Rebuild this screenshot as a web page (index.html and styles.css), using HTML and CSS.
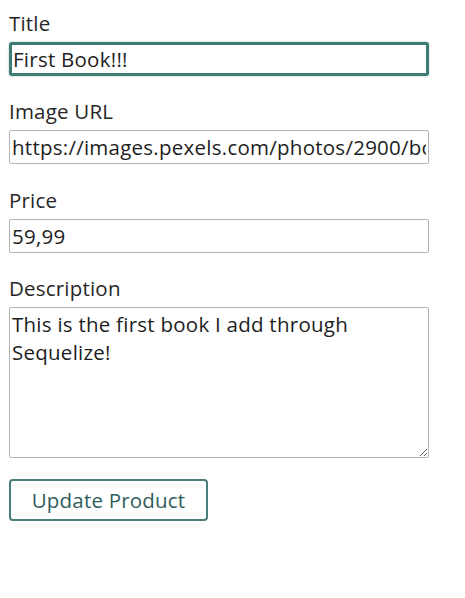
FILE: index.html
```html
<!DOCTYPE html>
<html>
<head>
<meta charset="utf-8">
<link rel="stylesheet" href="styles.css">
</head>
<body>
<form class="product-form">
  <div class="form-control">
    <label for="title">Title</label>
    <input class="field field--focused" type="text" id="title" value="First Book!!!">
  </div>
  <div class="form-control">
    <label for="imageUrl">Image URL</label>
    <input class="field" type="text" id="imageUrl" value="https://images.pexels.com/photos/2900/book-read.jpg">
  </div>
  <div class="form-control">
    <label for="price">Price</label>
    <input class="field" type="text" id="price" value="59,99">
  </div>
  <div class="form-control">
    <label for="description">Description</label>
    <textarea class="field field--area" id="description">This is the first book I add through Sequelize!</textarea>
  </div>
  <button class="btn" type="button">Update Product</button>
</form>
</body>
</html>
```
FILE: styles.css
```css
html, body {
  margin: 0;
  padding: 0;
  background: #ffffff;
}

body {
  font-family: "Open Sans", "Noto Sans", sans-serif;
  color: #262626;
}

.product-form {
  width: 420px;
  padding: 10px 0 0 9px;
  display: flex;
  flex-direction: column;
}

.form-control {
  display: flex;
  flex-direction: column;
  margin-bottom: 22.3px;
}

.form-control label {
  font-size: 20.5px;
  letter-spacing: 0.2px;
  line-height: 26px;
  margin-bottom: 6px;
  color: #262626;
}

.field {
  box-sizing: border-box;
  width: 420px;
  height: 34px;
  font-family: "Open Sans", "Noto Sans", sans-serif;
  font-size: 20.5px;
  letter-spacing: 0.25px;
  color: #1e1e1e;
  padding: 0 2px;
  border: 1.5px solid #b4b4b4;
  border-radius: 2px;
  background: #fff;
  outline: none;
}

.field--focused {
  border: 3px solid #3d7b75;
  border-radius: 3px;
  padding: 0 1px;
  box-shadow: 0 0 2px rgba(61, 123, 117, 0.5);
}

.field--area {
  height: 151px;
  resize: vertical;
  line-height: 28px;
  padding: 2px 2px;
  overflow: hidden;
}

.btn {
  align-self: flex-start;
  box-sizing: border-box;
  width: 199px;
  height: 42px;
  margin-top: -1.5px;
  font-family: "Open Sans", "Noto Sans", sans-serif;
  font-size: 20.5px;
  letter-spacing: 0.2px;
  color: #2f5d5c;
  background: #fff;
  border: 2px solid #4a7e7b;
  border-radius: 4px;
  padding: 0;
  cursor: pointer;
}
```
